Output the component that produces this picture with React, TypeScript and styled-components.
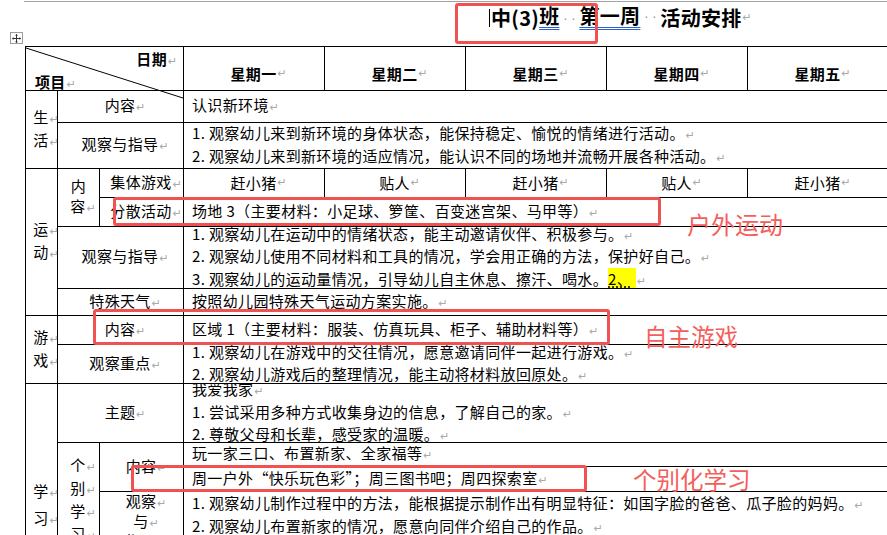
import React from "react";
import styled, { createGlobalStyle } from "styled-components";

const GlobalStyle = createGlobalStyle`
  html, body {
    margin: 0;
    padding: 0;
    overflow: hidden;
    background: #fff;
  }
  body {
    font-family: "Noto Sans CJK SC", "Noto Sans", sans-serif;
    color: #000;
  }
`;

const Page = styled.div`
  position: relative;
  width: 887px;
  height: 535px;
  overflow: hidden;
  background: #fff;
`;

const TopRule = styled.div`
  margin: 1px 0 0 24px;
  height: 1px;
  background: #a3a3a3;
`;

const TitleBar = styled.div`
  height: 44px;
  box-sizing: border-box;
  padding: 2px 0 0 489px;
  display: flex;
  align-items: flex-start;
`;

const Title = styled.h1`
  margin: 0;
  font-family: "Noto Sans CJK SC", sans-serif;
  font-size: 20px;
  line-height: 24px;
  font-weight: 700;
  letter-spacing: 0.3px;
  white-space: nowrap;
  display: flex;
  align-items: center;
`;

const Caret = styled.span`
  display: inline-block;
  width: 1px;
  height: 18px;
  background: #000;
  margin-right: 1px;
`;

const Grammar = styled.span`
  text-decoration: underline double #2c5fd6;
  text-underline-offset: 3px;
  text-decoration-thickness: 1px;
`;

const SpaceDots = styled.span<{ $w: number }>`
  display: inline-flex;
  justify-content: space-evenly;
  width: ${(p) => p.$w}px;
  color: #8f8f8f;
  font-family: "DejaVu Sans", sans-serif;
  font-weight: 400;
  font-size: 12px;
  letter-spacing: 0;
`;

const Mark = styled.span`
  display: inline-block;
  width: 0;
  overflow: visible;
  white-space: nowrap;
  padding-left: 1px;
  color: #a9a9a9;
  font-family: "DejaVu Sans", sans-serif;
  font-weight: 400;
  font-size: 11px;
  letter-spacing: 0;
`;

const TableWrap = styled.div`
  position: relative;
  margin-left: 25px;
`;

const MoveHandle = styled.div`
  position: absolute;
  left: -15px;
  top: -14px;
  width: 13px;
  height: 12px;
  box-sizing: border-box;
  border: 1px solid #9d9d9d;
  background: #fff;
  display: flex;
  align-items: center;
  justify-content: center;
`;

const Table = styled.div`
  width: 864px;
  box-sizing: border-box;
  display: grid;
  grid-template-columns: 31px 41px 83px repeat(5, 140px);
  grid-template-rows: 43px 31px 45px 28px 28px 61px 26px 28px 38px 58px 23px 24px 66px 68px;
  gap: 1px;
  padding: 1px;
  background: #000;
  font-size: 15px;
  letter-spacing: 0.35px;
`;

type Place = { $c: string; $r: string };

const Cell = styled.div<Place>`
  grid-column: ${(p) => p.$c};
  grid-row: ${(p) => p.$r};
  background: #fff;
  min-width: 0;
  box-sizing: border-box;
`;

const DiagCell = styled(Cell)`
  position: relative;
  z-index: 1;
  display: flex;
  flex-direction: column;
  justify-content: space-between;
  padding: 2px 15px 0 9px;
  font-weight: 700;
  line-height: 20px;
`;

const DiagLine = styled.svg`
  position: absolute;
  left: 0;
  top: 0;
  overflow: visible;
  pointer-events: none;
`;

const DiagTop = styled.div`
  align-self: flex-end;
`;

const DiagBottom = styled.div`
  align-self: flex-start;
`;

const HeadCell = styled(Cell)`
  display: flex;
  align-items: flex-end;
  justify-content: center;
  padding-bottom: 6px;
  font-weight: 700;
  line-height: 20px;
`;

const SectionCell = styled(Cell)<{ $lh?: number }>`
  display: flex;
  flex-direction: column;
  justify-content: center;
  align-items: center;
  line-height: ${(p) => p.$lh ?? 20}px;
`;

const LabelCell = styled(Cell)<{ $top?: boolean; $lh?: number }>`
  display: flex;
  flex-direction: column;
  justify-content: ${(p) => (p.$top ? "flex-start" : "center")};
  align-items: center;
  line-height: ${(p) => p.$lh ?? 20}px;
  white-space: nowrap;
`;

const ContentCell = styled(Cell)<{ $top?: boolean }>`
  display: flex;
  flex-direction: column;
  justify-content: ${(p) => (p.$top ? "flex-start" : "center")};
  padding: ${(p) => (p.$top ? "1px 0 0 8px" : "0 0 0 8px")};
  line-height: 19.5px;
  white-space: nowrap;
  overflow: hidden;
`;

const DayCell = styled(Cell)`
  display: flex;
  align-items: center;
  justify-content: center;
  line-height: 20px;
`;

const Line = styled.div`
  white-space: nowrap;
`;

const Highlight = styled.span`
  background: #ffff00;
  text-decoration: underline dotted #000;
  text-underline-offset: 2px;
  padding-right: 4px;
`;

const Callout = styled.div<{ $x: number; $y: number; $w: number; $h: number }>`
  position: absolute;
  left: ${(p) => p.$x}px;
  top: ${(p) => p.$y}px;
  width: ${(p) => p.$w}px;
  height: ${(p) => p.$h}px;
  box-sizing: border-box;
  border: 3px solid #f05252;
  border-radius: 3px;
  pointer-events: none;
`;

const Note = styled.div<{ $x: number; $y: number; $size: number }>`
  position: absolute;
  left: ${(p) => p.$x}px;
  top: ${(p) => p.$y}px;
  font-family: "Noto Sans CJK SC", sans-serif;
  font-size: ${(p) => p.$size}px;
  line-height: 26px;
  color: #f45e5b;
  white-space: nowrap;
  pointer-events: none;
`;

const M = () => <Mark>↵</Mark>;

const Dots: React.FC<{ w: number }> = ({ w }) => (
  <SpaceDots $w={w}>
    <span>·</span>
    <span>·</span>
  </SpaceDots>
);

const Vertical: React.FC<{ chars: string[]; marks?: boolean[] }> = ({ chars, marks }) => (
  <>
    {chars.map((ch, i) => (
      <Line key={i}>
        {ch}
        {(marks ? marks[i] : true) && <M />}
      </Line>
    ))}
  </>
);

const days = ["星期一", "星期二", "星期三", "星期四", "星期五"];
const games = ["赶小猪", "贴人", "赶小猪", "贴人", "赶小猪"];
const dayCols = ["4 / 5", "5 / 6", "6 / 7", "7 / 8", "8 / 9"];

export default function App() {
  return (
    <Page>
      <GlobalStyle />
      <TopRule />
      <TitleBar>
        <Title>
          <Caret />
          中(3)
          <Grammar>
            班<Dots w={20} />第一周
          </Grammar>
          <Dots w={20} />
          活动安排
          <M />
        </Title>
      </TitleBar>
      <TableWrap>
        <MoveHandle>
          <svg width="9" height="9" viewBox="0 0 9 9">
            <path d="M4.5 0.5V8.5M0.5 4.5H8.5" stroke="#333" strokeWidth="1" />
            <path d="M4.5 0L3 1.5H6Z M4.5 9L3 7.5H6Z M0 4.5L1.5 3V6Z M9 4.5L7.5 3V6Z" fill="#333" />
          </svg>
        </MoveHandle>
        <Table>
          <DiagCell $c="1 / 4" $r="1 / 2">
            <DiagLine width="157" height="51">
              <line x1="0" y1="1" x2="157" y2="51" stroke="#000" strokeWidth="1" />
            </DiagLine>
            <DiagTop>
              日期
              <M />
            </DiagTop>
            <DiagBottom>
              项目
              <M />
            </DiagBottom>
          </DiagCell>
          {days.map((d, i) => (
            <HeadCell key={d} $c={dayCols[i]} $r="1 / 2">
              {d}
              <M />
            </HeadCell>
          ))}

          {/* 生活 */}
          <SectionCell $c="1 / 2" $r="2 / 4">
            <Vertical chars={["生", "活"]} />
          </SectionCell>
          <LabelCell $c="2 / 4" $r="2 / 3">
            <Line>
              内容
              <M />
            </Line>
          </LabelCell>
          <ContentCell $c="4 / 9" $r="2 / 3">
            <Line>
              认识新环境
              <M />
            </Line>
          </ContentCell>
          <LabelCell $c="2 / 4" $r="3 / 4">
            <Line>
              观察与指导
              <M />
            </Line>
          </LabelCell>
          <ContentCell $c="4 / 9" $r="3 / 4">
            <Line>
              1. 观察幼儿来到新环境的身体状态，能保持稳定、愉悦的情绪进行活动。
              <M />
            </Line>
            <Line>
              2. 观察幼儿来到新环境的适应情况，能认识不同的场地并流畅开展各种活动。
              <M />
            </Line>
          </ContentCell>

          {/* 运动 */}
          <SectionCell $c="1 / 2" $r="4 / 8">
            <Vertical chars={["运", "动"]} />
          </SectionCell>
          <SectionCell $c="2 / 3" $r="4 / 6">
            <Vertical chars={["内", "容"]} marks={[false, true]} />
          </SectionCell>
          <LabelCell $c="3 / 4" $r="4 / 5">
            <Line>
              集体游戏
              <M />
            </Line>
          </LabelCell>
          {games.map((g, i) => (
            <DayCell key={i} $c={dayCols[i]} $r="4 / 5">
              {g}
              <M />
            </DayCell>
          ))}
          <LabelCell $c="3 / 4" $r="5 / 6">
            <Line>
              分散活动
              <M />
            </Line>
          </LabelCell>
          <ContentCell $c="4 / 9" $r="5 / 6">
            <Line>
              场地 3（主要材料：小足球、箩筐、百变迷宫架、马甲等）
              <M />
            </Line>
          </ContentCell>
          <LabelCell $c="2 / 4" $r="6 / 7">
            <Line>
              观察与指导
              <M />
            </Line>
          </LabelCell>
          <ContentCell $c="4 / 9" $r="6 / 7">
            <Line>
              1. 观察幼儿在运动中的情绪状态，能主动邀请伙伴、积极参与。
              <M />
            </Line>
            <Line>
              2. 观察幼儿使用不同材料和工具的情况，学会用正确的方法，保护好自己。
              <M />
            </Line>
            <Line>
              3. 观察幼儿的运动量情况，引导幼儿自主休息、擦汗、喝水。<Highlight>2、</Highlight>
              <M />
            </Line>
          </ContentCell>
          <LabelCell $c="2 / 4" $r="7 / 8">
            <Line>
              特殊天气
              <M />
            </Line>
          </LabelCell>
          <ContentCell $c="4 / 9" $r="7 / 8">
            <Line>
              按照幼儿园特殊天气运动方案实施。
              <M />
            </Line>
          </ContentCell>

          {/* 游戏 */}
          <SectionCell $c="1 / 2" $r="8 / 10">
            <Vertical chars={["游", "戏"]} />
          </SectionCell>
          <LabelCell $c="2 / 4" $r="8 / 9">
            <Line>
              内容
              <M />
            </Line>
          </LabelCell>
          <ContentCell $c="4 / 9" $r="8 / 9">
            <Line>
              区域 1（主要材料：服装、仿真玩具、柜子、辅助材料等）
              <M />
            </Line>
          </ContentCell>
          <LabelCell $c="2 / 4" $r="9 / 10">
            <Line>
              观察重点
              <M />
            </Line>
          </LabelCell>
          <ContentCell $c="4 / 9" $r="9 / 10">
            <Line>
              1. 观察幼儿在游戏中的交往情况，愿意邀请同伴一起进行游戏。
              <M />
            </Line>
            <Line>
              2. 观察幼儿游戏后的整理情况，能主动将材料放回原处。
              <M />
            </Line>
          </ContentCell>

          {/* 学习 */}
          <SectionCell $c="1 / 2" $r="10 / 15" $lh={24}>
            <Vertical chars={["学", "习"]} />
          </SectionCell>
          <LabelCell $c="2 / 4" $r="10 / 11">
            <Line>
              主题
              <M />
            </Line>
          </LabelCell>
          <ContentCell $c="4 / 9" $r="10 / 11">
            <Line>
              我爱我家
              <M />
            </Line>
            <Line>
              1. 尝试采用多种方式收集身边的信息，了解自己的家。
              <M />
            </Line>
            <Line>
              2. 尊敬父母和长辈，感受家的温暖。
              <M />
            </Line>
          </ContentCell>
          <SectionCell $c="2 / 3" $r="11 / 14">
            <Vertical chars={["个", "别", "学", "习"]} />
          </SectionCell>
          <LabelCell $c="3 / 4" $r="11 / 13">
            <Line>
              内容
              <M />
            </Line>
          </LabelCell>
          <ContentCell $c="4 / 9" $r="11 / 12">
            <Line>
              玩一家三口、布置新家、全家福等
              <M />
            </Line>
          </ContentCell>
          <ContentCell $c="4 / 9" $r="12 / 13">
            <Line>
              周一户外“快乐玩色彩”；周三图书吧；周四探索室
              <M />
            </Line>
          </ContentCell>
          <LabelCell $c="3 / 4" $r="13 / 14" $top $lh={17}>
            <Vertical chars={["观察", "与", "指导"]} />
          </LabelCell>
          <ContentCell $c="4 / 9" $r="13 / 14" $top>
            <Line>
              1. 观察幼儿制作过程中的方法，能根据提示制作出有明显特征：如国字脸的爸爸、瓜子脸的妈妈。
              <M />
            </Line>
            <Line>
              2. 观察幼儿布置新家的情况，愿意向同伴介绍自己的作品。
              <M />
            </Line>
          </ContentCell>
          <LabelCell $c="2 / 4" $r="14 / 15" />
          <ContentCell $c="4 / 9" $r="14 / 15" />
        </Table>
      </TableWrap>

      <Callout $x={455} $y={3} $w={143} $h={41} />
      <Callout $x={113} $y={197} $w={548} $h={29} />
      <Note $x={687} $y={211} $size={24}>户外运动</Note>
      <Callout $x={93} $y={309} $w={517} $h={36} />
      <Note $x={644} $y={323} $size={23.5}>自主游戏</Note>
      <Callout $x={131} $y={465} $w={456} $h={27} />
      <Note $x={633} $y={466} $size={23.5}>个别化学习</Note>
    </Page>
  );
}
